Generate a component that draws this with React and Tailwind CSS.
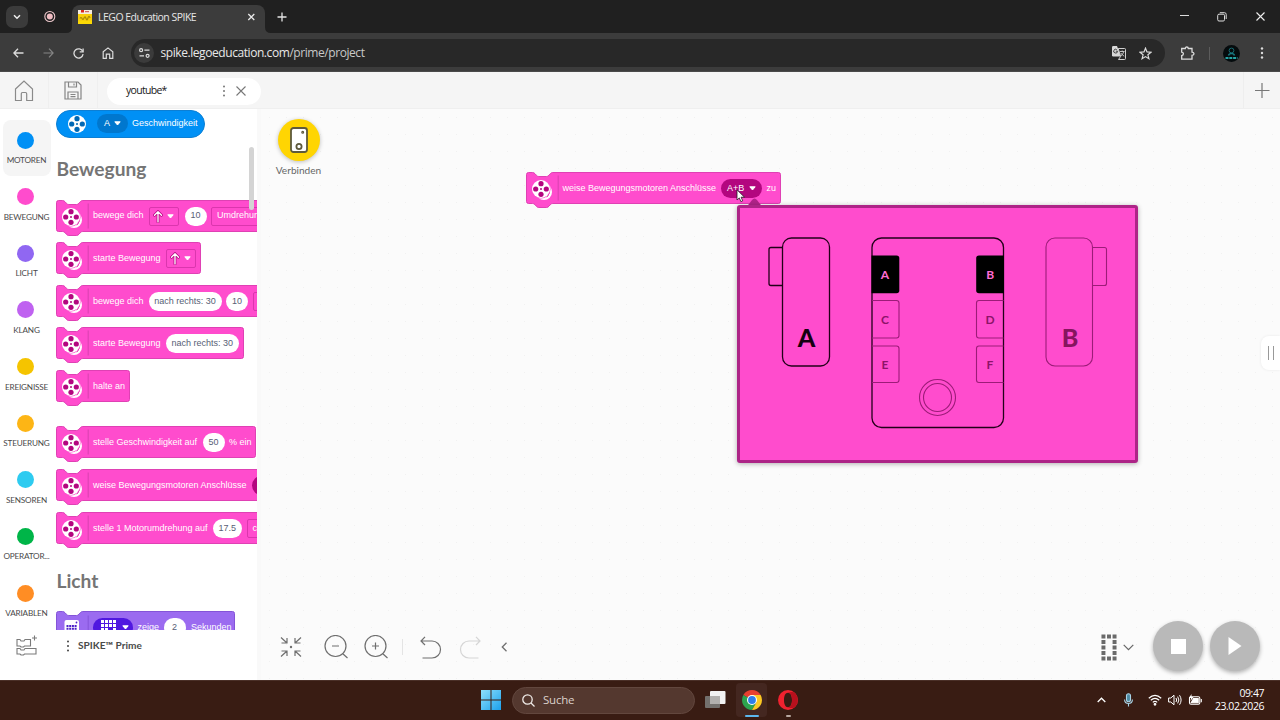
import React from "react";

const UI = "font-['Open_Sans','Noto_Sans',sans-serif]";
const GEO = "font-['Lato','Open_Sans',sans-serif]";

function TabBar() {
  return (
    <div className="relative h-[33px] shrink-0 bg-[#202020] flex items-start">
      <div className="w-[22px] h-[22px] ml-[6px] mt-[6px] rounded-[7px] bg-[#3b3b3b] flex items-center justify-center">
        <svg width="8" height="6" viewBox="0 0 8 6" fill="none" stroke="#eee" strokeWidth="1.5"><path d="M1 1.2L4 4.2L7 1.2" /></svg>
      </div>
      <svg className="ml-[15px] mt-[10px]" width="13" height="13" viewBox="0 0 13 13"><circle cx="6.800" cy="6.500" r="5" fill="none" stroke="#eec8cc" strokeWidth="1.1" /><circle cx="6.800" cy="6.500" r="3" fill="#f0bcc2" /></svg>
      <div className="relative ml-[16px] mt-[5px] w-[193px] h-[28px] bg-[#3c3c3c] rounded-t-[8px] flex items-center">
        <svg className="absolute -left-[6px] bottom-0" width="6" height="6"><path d="M6 0V6H0Q6 6 6 0Z" fill="#3c3c3c" /></svg>
        <svg className="absolute -right-[6px] bottom-0" width="6" height="6"><path d="M0 0V6H6Q0 6 0 0Z" fill="#3c3c3c" /></svg>
        <svg className="ml-[6px] -mt-[5px]" width="14" height="14" viewBox="0 0 14 14">
          <rect width="14" height="14" fill="#f7cf0a" /><rect width="14" height="4" fill="#f4ece0" /><rect x="3" width="3" height="2.500" fill="#d9281e" /><rect x="7" y="1" width="4" height="1.2" fill="#c66" />
          <path d="M2 8.5q1-2 2 0t2-.5 2 .5 2-.5 2 0" stroke="#a88a08" strokeWidth="1.2" fill="none" /><rect y="11" width="14" height="3" fill="#fbd905" />
        </svg>
        <span className={`${UI} ml-[6px] -mt-[3px] w-[140px] text-[10.5px] tracking-[-0.52px] text-[#e6e6e6] whitespace-nowrap`}>LEGO Education SPIKE</span>
        <svg className="ml-[9px] -mt-[5px]" width="8" height="8" viewBox="0 0 8 8" stroke="#e8e8e8" strokeWidth="1.3"><path d="M1.300 1L7.300 7M7.300 1L1.300 7" /></svg>
      </div>
      <svg className="ml-[12px] mt-[12px]" width="10" height="10" viewBox="0 0 10 10" stroke="#e4e4e4" strokeWidth="1.3"><path d="M5 .5V9.5M.5 5H9.5" /></svg>
      <div className="ml-auto flex items-center mt-[11px] h-[11px] pr-[15px]">
        <svg width="9" height="11" viewBox="0 0 9 11" stroke="#ddd"><path d="M0 4.5H9" /></svg>
        <svg className="ml-[28px]" width="10" height="10" viewBox="0 0 10 10" stroke="#ddd" fill="none"><rect x=".7" y="2.2" width="6.8" height="6.8" rx="1.3" /><path d="M2.8 .7H7.5Q9.2 .7 9.2 2.4V7" /></svg>
        <svg className="ml-[29px]" width="9" height="9" viewBox="0 0 9 9" stroke="#eee" strokeWidth="1.1"><path d="M.5 .5L8.5 8.5M8.5 .5L.5 8.5" /></svg>
      </div>
    </div>
  );
}

function AddressBar() {
  return (
    <div className="h-[39px] shrink-0 bg-[#3c3c3c] flex items-center pt-[2px] border-b border-[#4a4a4a]">
      <svg className="ml-[13px]" width="11" height="10" viewBox="0 0 11 10" fill="none" stroke="#dcdcdc" strokeWidth="1.3"><path d="M10.5 5H1M5 .7L.9 5L5 9.3" /></svg>
      <svg className="ml-[19px]" width="11" height="10" viewBox="0 0 11 10" fill="none" stroke="#858585" strokeWidth="1.2"><path d="M.5 5H10M6 .7L10.1 5L6 9.3" /></svg>
      <svg className="ml-[19px]" width="11" height="11" viewBox="0 0 11 11" fill="none" stroke="#dcdcdc" strokeWidth="1.3"><path d="M9.8 3.6A4.6 4.6 0 1 0 10.1 6.2" /><path d="M10.1 .5V3.9H6.7" /></svg>
      <svg className="ml-[18px]" width="12" height="12" viewBox="0 0 12 12" fill="none" stroke="#dcdcdc" strokeWidth="1.2"><path d="M1.2 4.8L6 .9L10.8 4.8V11.3H7.7V7.2H4.3V11.3H1.2Z" /></svg>
      <div className="ml-[17px] w-[1034px] h-[28px] rounded-full bg-[#282828] flex items-center">
        <div className="ml-[3px] w-[20px] h-[20px] rounded-full bg-[#3b3b3b] flex items-center justify-center">
          <svg width="11" height="10" viewBox="0 0 11 10" fill="none" stroke="#dcdcdc" strokeWidth="1.2"><circle cx="2.1" cy="2.2" r="1.5" /><path d="M5.4 2.2H10.5M.5 7.8H5" /><circle cx="8.6" cy="7.8" r="1.5" /></svg>
        </div>
        <span className={`${UI} ml-[6.500px] text-[12px] tracking-[-0.430px] text-[#e8e8e8] whitespace-nowrap`}>spike.legoeducation.com<span className="text-[#c8c8c8]">/prime/project</span></span>
        <svg className="ml-auto" width="14" height="14" viewBox="0 0 14 14"><path d="M1.2 0H5L8.8 10.5H1.2Q0 10.5 0 9.300V1.200Q0 0 1.200 0Z" fill="#d8d8d8" /><path d="M6.200 2.500H12.600Q13.500 2.500 13.500 3.400V12.600Q13.500 13.500 12.600 13.500H6.500L8.600 10.500Z" fill="none" stroke="#d0d0d0" /><path d="M5.500 5.200H3.800M5.500 5.200A1.900 1.900 0 1 1 4.800 3.700" fill="none" stroke="#333" strokeWidth=".9" /><path d="M8 5.500H12.500M10.200 4.500V5.500M11.800 5.500Q11 8.500 8.800 10M8.800 7Q10 9 12.200 10.200" fill="none" stroke="#d0d0d0" strokeWidth=".9" /></svg>
        <svg className="ml-[13px] mr-[13.500px]" width="13" height="13" viewBox="0 0 13 13" fill="none" stroke="#dcdcdc" strokeWidth="1.2"><path d="M6.500 1.200L8 4.900L12 5.200L8.900 7.800L9.900 11.700L6.500 9.600L3.100 11.700L4.100 7.800L1 5.200L5 4.900Z" /></svg>
      </div>
      <svg className="ml-[15px]" width="15" height="15" viewBox="0 0 15 15" fill="none" stroke="#dcdcdc" strokeWidth="1.300"><path d="M1.700 2.500H5.300Q5.300 1 6.800 1T8.300 2.500H12V6.200Q14 6.300 14 7.800T12 9.400V13.200H1.700V9.600Q3.400 9.400 3.400 7.800T1.700 6.100Z" /></svg>
      <div className="ml-[14px] w-px h-[13px] bg-[#5c5c5c]" />
      <svg className="ml-[13px]" width="17" height="17" viewBox="0 0 17 17"><circle cx="8.500" cy="8.500" r="8.500" fill="#050b0d" /><circle cx="8.500" cy="5.500" r="2.400" fill="none" stroke="#176a70" /><path d="M5.500 10.500Q6 8.500 8.500 8.500T11.500 10.500" fill="none" stroke="#187880" strokeWidth="1.500" /><path d="M2.500 13H14.500" stroke="#25a5a5" strokeWidth="2" strokeDasharray="3 .8" /></svg>
      <svg className="ml-[20px]" width="4" height="12" viewBox="0 0 4 12" fill="#dcdcdc"><circle cx="2" cy="1.500" r="1.200" /><circle cx="2" cy="6" r="1.200" /><circle cx="2" cy="10.500" r="1.200" /></svg>
    </div>
  );
}

function ProjectHeader() {
  return (
    <div className="h-[37px] shrink-0 bg-[#f5f5f5] border-b border-[#efefef] flex items-center">
      <div className="w-[49px] h-full flex items-center justify-center pt-px border-r border-[#efefef]">
        <svg width="20" height="22" viewBox="0 0 20 22" fill="none" stroke="#8a8a8a" strokeWidth="1.200"><path d="M1.500 9L10 1L18.500 9V20.500H12.700V14Q12.700 12.500 11.500 12.500H8.500Q7.300 12.500 7.300 14V20.500H1.500Z" /></svg>
      </div>
      <div className="w-[49px] h-full flex items-center justify-center pt-px border-r border-[#efefef]">
        <svg width="18" height="19" viewBox="0 0 18 19" fill="none" stroke="#858585" strokeWidth="1.200"><path d="M1 1H14L17 4V18H1Z" /><path d="M4.500 1V6H12.500V1M10 2.500V4.500M4 18V11H14V18M6.500 13.500H11.500M6.500 15.700H11.500" /></svg>
      </div>
      <div className="ml-[9px] h-[27px] w-[154px] mt-[2px] rounded-full bg-white flex items-center">
        <span className={`${UI} ml-[19px] w-[92px] text-[10.500px] tracking-[-0.700px] text-[#181818] whitespace-nowrap`}>youtube*</span>
        <svg className="ml-[4px]" width="4" height="12" viewBox="0 0 4 12" fill="#777"><circle cx="2" cy="1.500" r="1" /><circle cx="2" cy="6" r="1" /><circle cx="2" cy="10.500" r="1" /></svg>
        <svg className="ml-[10px]" width="10" height="10" viewBox="0 0 10 10" stroke="#777" strokeWidth="1.100"><path d="M.5 .5L9.500 9.500M9.500 .5L.5 9.500" /></svg>
      </div>
      <div className="ml-auto w-[37px] h-full border-l border-[#eeeeee] flex items-center justify-center">
        <svg width="15" height="15" viewBox="0 0 15 15" stroke="#777" strokeWidth="1.200"><path d="M7 0V15M0 7.500H14.500" /></svg>
      </div>
    </div>
  );
}

function Category({ name, dot, active }) {
  return (
    <div className={`w-[48px] h-[56px] mb-[0.65px] shrink-0 flex flex-col items-center rounded-[8px] ${active ? "bg-[#f5f5f5]" : ""}`}>
      <div className={`w-[17px] h-[17px] mt-[11.500px] -ml-[2px] rounded-full ${dot}`} />
      <span className={`${GEO} mt-[5.500px] text-[8.200px] leading-[13px] tracking-[-0.200px] text-[#4a4a4a] whitespace-nowrap`}>{name}</span>
    </div>
  );
}

function Categories() {
  return (
    <div className="w-[53px] shrink-0 bg-white flex flex-col items-center pt-[11px]">
      <Category name="MOTOREN" dot="bg-[#0090f5]" active />
      <Category name="BEWEGUNG" dot="bg-[#ff4ccd]" />
      <Category name="LICHT" dot="bg-[#9067f2]" />
      <Category name="KLANG" dot="bg-[#bf62f0]" />
      <Category name="EREIGNISSE" dot="bg-[#f5c400]" />
      <Category name="STEUERUNG" dot="bg-[#fdb515]" />
      <Category name="SENSOREN" dot="bg-[#2ecbf0]" />
      <Category name="OPERATOR..." dot="bg-[#00b548]" />
      <Category name="VARIABLEN" dot="bg-[#ff8d24]" />
      <svg className="mt-[5px]" width="22" height="21" viewBox="0 0 22 21" fill="none" stroke="#7a7a7a" strokeWidth="1.100"><path d="M1 4.500H4L5 6H8L9 4.500H14.500V11H8.500L7.500 12H5L4 11H1ZM1 13.500H4L5 15H8L9 13.500H20V19H8.500L7.500 20H5L4 19H1ZM18.500 .5V5.500M16 3H21" /></svg>
    </div>
  );
}

function MotorIcon({ double, hole }) {
  return (
    <svg width="22" height="22" viewBox="0 0 22 22" className="shrink-0">
      {double && <g><circle cx="13" cy="14" r="8" fill="#fff" /><path d="M18.800 10.500Q20 14 17.500 17.500L15.500 19.800Q18 14 18.800 10.500Z" fill={hole} /><circle cx="10" cy="11" r="9.600" fill="#ff4ccd" /></g>}
      <circle cx="10" cy="11" r="9" fill="#fff" />
      <g fill={hole}><circle cx="10" cy="5.700" r="2.600" /><circle cx="10" cy="16.300" r="2.600" /><circle cx="4.700" cy="11" r="2.600" /><circle cx="15.300" cy="11" r="2.600" /><circle cx="10" cy="11" r="1" /></g>
    </svg>
  );
}

function MotionBlock({ w, className = "", children }) {
  const d = `M.5 2.500Q.5 .5 2.500 .5H6.500Q8 .5 9 1.700L10.300 3.200Q11.300 4.500 12.800 4.500H20.500Q22 4.500 23 3.200L24.300 1.700Q25.300 .5 26.800 .5H${w - 2.5}Q${w - 0.5} .5 ${w - 0.5} 2.500V29.500Q${w - 0.5} 31.500 ${w - 2.5} 31.500H26.800Q25.300 31.500 24.300 32.700L23 34.200Q22 35.500 20.500 35.500H12.800Q11.300 35.500 10.300 34.200L9 32.700Q8 31.500 6.500 31.500H2.500Q.5 31.500 .5 29.500Z`;
  return (
    <div className={`relative h-[36px] ${className}`}>
      <svg className="absolute left-0 top-0 overflow-visible" width={w} height="36"><path d={d} fill="#ff4ccd" stroke="#db36ae" strokeWidth=".9" /><path d="M32.200 3.500V28.500" stroke="#d53fae" strokeWidth=".9" /></svg>
      <div className="relative h-[33px] pl-[5px] flex items-center gap-[4.500px] font-['Liberation_Sans',Arial,sans-serif] text-[9px] text-white">
        <div className="mr-[5.500px] pt-[1px]"><MotorIcon double hole="#b3067f" /></div>
        {children}
      </div>
    </div>
  );
}

const T = ({ w = "", children }) => <span className={`${w} shrink-0 whitespace-nowrap`}>{children}</span>;
const Oval = ({ w, children }) => <span className={`${w} h-[19px] shrink-0 rounded-full bg-white text-[#575e75] flex items-center justify-center whitespace-nowrap`}>{children}</span>;
const Caret = () => <svg width="7" height="5" viewBox="0 0 7 5"><path d="M.8 .8H6.200L3.500 4Z" fill="#fff" stroke="#fff" strokeLinejoin="round" /></svg>;
const ArrowMenu = () => (
  <span className="w-[30px] h-[19px] shrink-0 rounded-[2px] border border-[#db36ae] flex items-center justify-between pl-[3px] pr-[3.500px]">
    <svg width="10" height="13" viewBox="0 0 10 13" fill="none" strokeLinecap="round" strokeLinejoin="round"><path d="M5 12V2M1.500 5.300L5 1.600L8.500 5.300" stroke="#b3067f" strokeWidth="2.800" /><path d="M5 12V2M1.500 5.300L5 1.600L8.500 5.300" stroke="#fff" strokeWidth="1.300" /></svg>
    <Caret />
  </span>
);
const Menu = ({ w, children }) => <span className={`${w} h-[19px] shrink-0 rounded-[2px] border border-[#db36ae] flex items-center pl-[5px] whitespace-nowrap`}>{children}</span>;

function Palette() {
  return (
    <div className="relative w-[204px] h-[521px] shrink-0 overflow-hidden bg-white pl-[3px]">
      <div className="mt-[0.500px] w-[148.500px] h-[28px] rounded-full bg-[#0090f5] border border-[#0c7fd4] flex items-center pl-[10px] text-white text-[9px] font-['Liberation_Sans',Arial,sans-serif]">
        <MotorIcon hole="#0068b5" />
        <span className="ml-[8px] w-[31px] h-[19px] rounded-full bg-[#0077ce] flex items-center justify-center gap-[4px]"><T>A</T><Caret /></span>
        <span className="ml-[4px]"><T>Geschwindigkeit</T></span>
      </div>
      <h2 className={`${GEO} mt-[19px] ml-[0.500px] h-[24px] leading-[24px] font-bold text-[19.200px] text-[#757575]`}>Bewegung</h2>
      <div className="mt-[19px] flex flex-col gap-[6.670px]">
        <MotionBlock w={230}><T w="w-[51px]">bewege dich</T><ArrowMenu /><span className="ml-[1.500px] flex"><Oval w="w-[22px]">10</Oval></span><Menu w="w-[80px]">Umdrehungen</Menu></MotionBlock>
        <MotionBlock w={145}><T w="w-[68px]">starte Bewegung</T><ArrowMenu /></MotionBlock>
        <MotionBlock w={260}><T w="w-[51px]">bewege dich</T><Oval w="w-[73px]">nach rechts: 30</Oval><Oval w="w-[22px]">10</Oval><Menu w="w-[60px]" /></MotionBlock>
        <MotionBlock w={188}><T w="w-[68px]">starte Bewegung</T><Oval w="w-[73.500px]">nach rechts: 30</Oval></MotionBlock>
        <MotionBlock w={74}><T>halte an</T></MotionBlock>
        <MotionBlock w={200} className="mt-[13.700px]"><T w="w-[105px]">stelle Geschwindigkeit auf</T><Oval w="w-[22px]">50</Oval><T>% ein</T></MotionBlock>
        <MotionBlock w={250}><T w="w-[154px]">weise Bewegungsmotoren Anschlüsse</T><span className="w-[41px] h-[19px] rounded-full bg-[#b3067f] shrink-0" /></MotionBlock>
        <MotionBlock w={250}><T w="w-[115px]">stelle 1 Motorumdrehung auf</T><Oval w="w-[29.500px]">17.5</Oval><Menu w="w-[40px]">cm</Menu></MotionBlock>
      </div>
      <h2 className={`${GEO} mt-[21px] ml-[0.500px] h-[24px] leading-[24px] font-bold text-[19.200px] text-[#757575]`}>Licht</h2>
      <div className="relative mt-[18px] h-[36px]">
        <svg className="absolute left-0 top-0" width="180" height="36"><path d="M.5 2.500Q.5 .5 2.500 .5H6.500Q8 .5 9 1.700L10.300 3.200Q11.300 4.500 12.800 4.500H20.500Q22 4.500 23 3.200L24.300 1.700Q25.300 .5 26.800 .5H176.500Q178.500 .5 178.500 2.500V36H.5Z" fill="#9b6bf0" stroke="#8454d8" /><path d="M32.200 4.500V30" stroke="#8454d8" /></svg>
        <div className="relative h-[33px] flex items-center pl-[8px] font-['Liberation_Sans',Arial,sans-serif] text-[9px] text-white">
          <svg className="mt-[4px]" width="16" height="19" viewBox="0 0 16 19"><rect x=".5" y="0" width="14.500" height="19" rx="2" fill="#fff" /><g fill="#4d20c8"><circle cx="12.500" cy="2.500" r=".9" /><path d="M2.500 5h2v2h-2zM5.200 5h2v2h-2zM7.900 5h2v2h-2zM10.600 5h2v2h-2zM2.500 7.700h2v2h-2zM5.200 7.700h2v2h-2zM7.900 7.700h2v2h-2zM10.600 7.700h2v2h-2zM2.500 10.400h2v2h-2zM5.200 10.400h2v2h-2zM7.900 10.400h2v2h-2zM10.600 10.400h2v2h-2z" /></g></svg>
          <span className="ml-[13px] w-[40px] h-[19px] rounded-full bg-[#5018e0] flex items-center pl-[8px] gap-[6px]">
            <svg width="15" height="15" viewBox="0 0 15 15" fill="#fff"><path d="M0 0h3v3h-3zM4 0h3v3h-3zM8 0h3v3h-3zM12 0h3v3h-3zM0 4h3v3h-3zM4 4h3v3h-3zM8 4h3v3h-3zM12 4h3v3h-3zM0 8h3v3h-3zM12 8h3v3h-3zM4 8h3v3h-3zM8 12h3v3h-3z" /></svg>
            <Caret />
          </span>
          <span className="ml-[4.500px] w-[22px]"><T>zeige</T></span>
          <span className="ml-[4px]"><Oval w="w-[22px]">2</Oval></span>
          <span className="ml-[5.500px]"><T>Sekunden</T></span>
        </div>
      </div>
      <div className="absolute left-[196px] top-[38px] w-[5px] h-[63px] rounded-full bg-[#d4d4d4]" />
    </div>
  );
}

function PortDiagram() {
  const faint = "#9c1c78";
  return (
    <svg width="394" height="251" viewBox="740 208 394 251" fill="none" fontFamily="Lato, sans-serif" textAnchor="middle">
      <g stroke="#220019" strokeWidth="1.300">
        <rect x="782.500" y="238" width="47" height="128" rx="9" />
        <path d="M782.500 247.500H771Q769 247.500 769 249.500V283.500Q769 285.500 771 285.500H782.500" />
        <rect x="872" y="238" width="131.500" height="189.500" rx="9.500" />
      </g>
      <g stroke={faint} strokeWidth="1.100">
        <rect x="1046" y="238" width="46.500" height="128" rx="9" />
        <path d="M1092.500 247.500H1104.500Q1106.500 247.500 1106.500 249.500V283.500Q1106.500 285.500 1104.500 285.500H1092.500" />
        <path d="M872 300.500H896.500Q899 300.500 899 303V335.500Q899 338 896.500 338H872M872 346H896.500Q899 346 899 348.500V380Q899 382.500 896.500 382.500H872" />
        <path d="M1003.500 300.500H979Q976.500 300.500 976.500 303V335.500Q976.500 338 979 338H1003.500M1003.500 346H979Q976.500 346 976.500 348.500V380Q976.500 382.500 979 382.500H1003.500" />
        <circle cx="937.500" cy="397.500" r="18" /><circle cx="937.500" cy="397.500" r="14" />
      </g>
      <path d="M871.500 255.500H896.500Q899.300 255.500 899.300 258V290.500Q899.300 293.300 896.500 293.300H871.500Z" fill="#000" />
      <path d="M1004 255.500H979Q976.200 255.500 976.200 258V290.500Q976.200 293.300 979 293.300H1004Z" fill="#000" />
      <g fontSize="12" fontWeight="700">
        <text x="885" y="279.300" fill="#ff6cd2">A</text><text x="990.300" y="279.300" fill="#ff6cd2">B</text>
        <g fill="#8c1469"><text x="885" y="324">C</text><text x="990" y="324">D</text><text x="885" y="369.300">E</text><text x="990" y="369.300">F</text></g>
      </g>
      <g fontSize="25" fontWeight="900"><text x="806.500" y="347" fill="#150010">A</text><text x="1070" y="346.500" fill="#86155f">B</text></g>
    </svg>
  );
}

function Canvas() {
  return (
    <div className="relative flex-1 overflow-hidden bg-[#fbfbfb] bg-[radial-gradient(circle,#f1f1f1_0.700px,transparent_1px)] bg-[size:17px_17px]">
      <div className="absolute left-[14.500px] top-[10px] w-[46px] flex flex-col items-center">
        <div className="w-[42px] h-[42px] rounded-full bg-[#ffd502] shadow-[0_1px_4px_rgba(0,0,0,0.250)] flex items-center justify-center">
          <svg width="18" height="26" viewBox="0 0 18 26" fill="#fff" stroke="#5e5a3c" strokeWidth="1.800"><rect x="1" y="1" width="16" height="24" rx="2.500" /><circle cx="9" cy="19.500" r="2.600" /><circle cx="12.700" cy="5.200" r=".6" /></svg>
        </div>
        <span className={`${GEO} mt-[2px] text-[10.100px] leading-[14px] text-[#666] whitespace-nowrap`}>Verbinden</span>
      </div>

      <div className="absolute left-[264.500px] top-[63px]">
        <MotionBlock w={255}>
          <T w="w-[154px]">weise Bewegungsmotoren Anschlüsse</T>
          <span className="w-[41px] h-[19px] shrink-0 rounded-full bg-[#b3067f] flex items-center pl-[6px] gap-[5px]"><T>A+B</T><Caret /></span>
          <T>zu</T>
        </MotionBlock>
      </div>
      <svg className="absolute left-[483px] top-[88px]" width="22" height="10"><path d="M0 10Q3 10 5 7L8 3Q10.500 0 13 3L16 7Q18 10 22 10Z" fill="#b02389" /></svg>
      <div className="absolute left-[476px] top-[96px] w-[401px] h-[258px] rounded-[3px] border-[3.500px] border-[#ad2487] bg-[#ff4ccd] shadow-[0_1px_5px_rgba(0,0,0,0.300)]"><PortDiagram /></div>
      <svg className="absolute left-[475px] top-[80px]" width="10" height="14" viewBox="0 0 10 14"><path d="M1 .8V11L3.300 8.900L4.900 12.600L6.700 11.800L5.100 8.200H8.500Z" fill="#fff" stroke="#222" strokeWidth=".8" /></svg>

      <div className="absolute left-[18.500px] top-[526px] h-[24px] flex items-center text-[#6f6f6f]">
        <svg width="22" height="22" viewBox="0 0 22 22" fill="none" stroke="currentColor" strokeWidth="1.200"><path d="M1 1.500L7 7M7 2V7H1.500M21 1.500L15 7M15 2V7H20.500M1 20.500L7 15M7 20V15H1.500M21 20.500L15 15M15 20V15H20.500" /><circle cx="11" cy="11" r="1.200" fill="currentColor" stroke="none" /></svg>
        <svg className="ml-[22.500px]" width="24" height="24" viewBox="0 0 24 24" fill="none" stroke="currentColor" strokeWidth="1.200"><circle cx="11.500" cy="11" r="10.500" /><path d="M18.500 18.500L23.500 23M8 11H15" /></svg>
        <svg className="ml-[16px]" width="24" height="24" viewBox="0 0 24 24" fill="none" stroke="currentColor" strokeWidth="1.200"><circle cx="11.500" cy="11" r="10.500" /><path d="M18.500 18.500L23.500 23M8 11H15M11.500 7.500V14.500" /></svg>
        <div className="ml-[14px] w-px h-[16px] bg-[#e4e4e4]" />
        <svg className="ml-[17px]" width="22" height="23" viewBox="0 0 22 23" fill="none" stroke="currentColor" strokeWidth="1.200"><path d="M1 5H12A8.500 8.500 0 0 1 12 22H2.500M5 .8L1 5L5 9" /></svg>
        <svg className="ml-[16.500px] text-[#d5d5d5]" width="22" height="23" viewBox="0 0 22 23" fill="none" stroke="currentColor" strokeWidth="1.200"><path d="M21 5H10A8.500 8.500 0 0 0 10 22H19.500M17 .8L21 5L17 9" /></svg>
        <svg className="ml-[20px]" width="7" height="10" viewBox="0 0 7 10" fill="none" stroke="currentColor" strokeWidth="1.300"><path d="M5.500 .8L1.300 5L5.500 9.200" /></svg>
      </div>

      <div className="absolute right-0 top-[227px] w-[19px] h-[34px] rounded-l-[8px] bg-white shadow-[0_0_3px_rgba(0,0,0,0.080)] flex items-center justify-center gap-[4px]">
        <div className="w-px h-[14px] bg-[#999]" /><div className="w-px h-[14px] bg-[#999]" />
      </div>

      <div className="absolute right-[20px] top-[512px] h-[50px] flex items-center">
        <svg className="mt-[2px]" width="16" height="27" viewBox="0 0 17 28" preserveAspectRatio="none" fill="#6a6a6a"><path d="M.500 .500h4.200v4.200h-4.200zM6.400 .500h4.200v4.200h-4.200zM12.300 .500h4.200v4.200h-4.200zM.500 6.200h4.200v4.200h-4.200zM12.300 6.200h4.200v4.200h-4.200zM.500 11.900h4.200v4.200h-4.200zM12.300 11.900h4.200v4.200h-4.200zM.500 17.600h4.200v4.200h-4.200zM12.300 17.600h4.200v4.200h-4.200zM.500 23.300h4.200v4.200h-4.200zM6.400 23.300h4.200v4.200h-4.200zM12.300 23.300h4.200v4.200h-4.200z" /></svg>
        <svg className="ml-[6px] mt-[2px]" width="11" height="7" viewBox="0 0 11 7" fill="none" stroke="#666" strokeWidth="1.200"><path d="M.7 .8L5.500 5.700L10.300 .8" /></svg>
        <div className="ml-[19.500px] w-[50px] h-[50px] rounded-full bg-[#b9b9b9] shadow-[0_2px_4px_rgba(0,0,0,0.300)] flex items-center justify-center"><div className="w-[15px] h-[15px] bg-white" /></div>
        <div className="ml-[7px] w-[50px] h-[50px] rounded-full bg-[#b9b9b9] shadow-[0_2px_4px_rgba(0,0,0,0.300)] flex items-center justify-center"><svg width="14" height="18" viewBox="0 0 14 18"><path d="M.5 0L13.500 9L.5 18Z" fill="#fff" /></svg></div>
      </div>
    </div>
  );
}

function Taskbar() {
  return (
    <div className={`${UI} h-[40px] shrink-0 bg-[#391c13] border-t border-[#4a2f27] flex items-center text-white`}>
      <svg className="ml-[481px] -mt-px" width="20" height="20" viewBox="0 0 20 20"><defs><linearGradient id="win" x1="0" y1="0" x2="1" y2="1"><stop offset="0" stopColor="#8fe0fc" /><stop offset="1" stopColor="#1ba0ec" /></linearGradient></defs><path d="M0 0H9.500V9.500H0ZM10.500 0H20V9.500H10.500ZM0 10.500H9.500V20H0ZM10.500 10.500H20V20H10.500Z" fill="url(#win)" /></svg>
      <div className="ml-[11px] -mt-px w-[183px] h-[27px] rounded-full bg-[#54382f] border border-[#62473e] flex items-center">
        <svg className="ml-[9px]" width="13" height="13" viewBox="0 0 13 13" fill="none" stroke="#f0ebe8" strokeWidth="1.300"><circle cx="5.500" cy="5.500" r="4.700" /><path d="M9 9L12.500 12.500" /></svg>
        <span className="ml-[8px] text-[11.500px] tracking-[-0.200px] text-[#ddd2cc]">Suche</span>
      </div>
      <svg className="ml-[10px] -mt-px" width="21" height="20" viewBox="0 0 21 20"><rect x="5" y="1" width="15.500" height="13" rx="1" fill="#f2f2f2" /><rect x="0" y="6" width="15" height="12" rx="1" fill="#73706d" /><rect x="5" y="6" width="10" height="8" fill="#b2b0ae" /></svg>
      <div className="ml-[10px] -mt-px relative w-[31px] h-[34px] rounded-[4px] bg-[#442720] flex items-center justify-center">
        <svg width="20" height="20" viewBox="0 0 20 20"><path d="M10 10L1.340 5A10 10 0 0 1 18.660 5Z" fill="#e8402f" /><path d="M10 10L1.340 5A10 10 0 0 0 10 20L14.300 12.500Z" fill="#2da44e" /><path d="M10 10L14.330 12.500L10 20A10 10 0 0 0 18.660 5H10Z" fill="#fcc822" /><circle cx="10" cy="10" r="5" fill="#fff" /><circle cx="10" cy="10" r="3.900" fill="#2f7de8" /></svg>
        <div className="absolute left-[9px] bottom-0 w-[14px] h-[2.500px] rounded-full bg-[#5cb8ee]" />
      </div>
      <div className="relative ml-[11px] -mt-px w-[20px] h-[34px] flex items-center">
        <svg width="20" height="20" viewBox="0 0 20 20"><path fillRule="evenodd" d="M10 0A10 10 0 1 0 10 20A10 10 0 1 0 10 0ZM10 2.800C12.700 2.800 14 6 14 10S12.700 17.200 10 17.200S6 14 6 10S7.300 2.800 10 2.800Z" fill="#f0222f" /><path d="M10 2.800Q15 1 17 3A10 10 0 0 1 17 17Q15 19 10 17.200C13 17 14 14 14 10S13 3 10 2.800Z" fill="#b8101d" /></svg>
        <div className="absolute left-[8px] bottom-0 w-[5px] h-[2.500px] rounded-full bg-[#b8a8a0]" />
      </div>
      <div className="ml-auto -mt-[2px] flex items-center">
        <svg width="9" height="6" viewBox="0 0 9 6" fill="none" stroke="#fff" strokeWidth="1.300"><path d="M.7 5L4.500 1.200L8.300 5" /></svg>
        <svg className="ml-[18px]" width="9" height="14" viewBox="0 0 9 14" fill="none" stroke="#a9d3e6" strokeWidth="1.100"><rect x="2.500" y=".7" width="4" height="8" rx="2" fill="#4c8aa4" /><path d="M.6 6.500Q.6 10.500 4.500 10.500T8.400 6.500M4.500 10.500V13.500" /></svg>
        <svg className="ml-[15px]" width="14" height="12" viewBox="0 0 14 12" fill="none" stroke="#fff" strokeWidth="1.200"><path d="M.8 4.200Q7-1.600 13.200 4.200M2.800 6.300Q7 2.600 11.200 6.300M4.800 8.400Q7 6.500 9.200 8.400" /><circle cx="7" cy="10.300" r=".8" fill="#fff" /></svg>
        <svg className="ml-[6px]" width="14" height="12" viewBox="0 0 14 12" fill="none" stroke="#fff" strokeWidth="1"><path d="M.6 4H2.800L6 1.200V10.800L2.800 8H.6ZM8 4Q9.300 6 8 8M9.700 2.600Q12 6 9.700 9.400M11.500 1.200Q14.700 6 11.500 10.800" /></svg>
        <svg className="ml-[6px]" width="14" height="12" viewBox="0 0 14 12" fill="none" stroke="#fff" strokeWidth="1.100"><rect x="1.500" y="2.800" width="10.300" height="7.500" rx="1.500" /><path d="M5.500 4.500H10.200V8.700H3.200Z" fill="#fff" /><path d="M13.300 5V8.200" /><path d="M3.500 0L1 4H3L2.500 7L5.500 3H3.500Z" fill="#fff" stroke="none" /></svg>
        <div className="ml-[12.500px] mr-[16px] flex flex-col items-end text-[10.500px] leading-[13px] tracking-[-0.450px]"><span>09:47</span><span>23.02.2026</span></div>
      </div>
    </div>
  );
}

export default function App() {
  return (
    <div className="w-[1280px] h-[720px] overflow-hidden flex flex-col bg-white">
      <TabBar />
      <AddressBar />
      <ProjectHeader />
      <div className="flex h-[571px] shrink-0">
        <Categories />
        <div className="flex flex-col w-[204px] shrink-0 bg-white">
          <Palette />
          <div className="flex-1 flex items-start pt-[9px] pl-[13px]">
            <svg className="mt-[1px]" width="4" height="12" viewBox="0 0 4 12" fill="#444"><circle cx="2" cy="1.500" r="1" /><circle cx="2" cy="6" r="1" /><circle cx="2" cy="10.500" r="1" /></svg>
            <span className={`${GEO} ml-[8px] text-[10.100px] leading-[13px] font-bold text-[#4a4a4a] whitespace-nowrap`}>SPIKE™ Prime</span>
          </div>
        </div>
        <div className="w-[4px] shrink-0 bg-[#f9f9f9]" />
        <Canvas />
      </div>
      <Taskbar />
    </div>
  );
}
